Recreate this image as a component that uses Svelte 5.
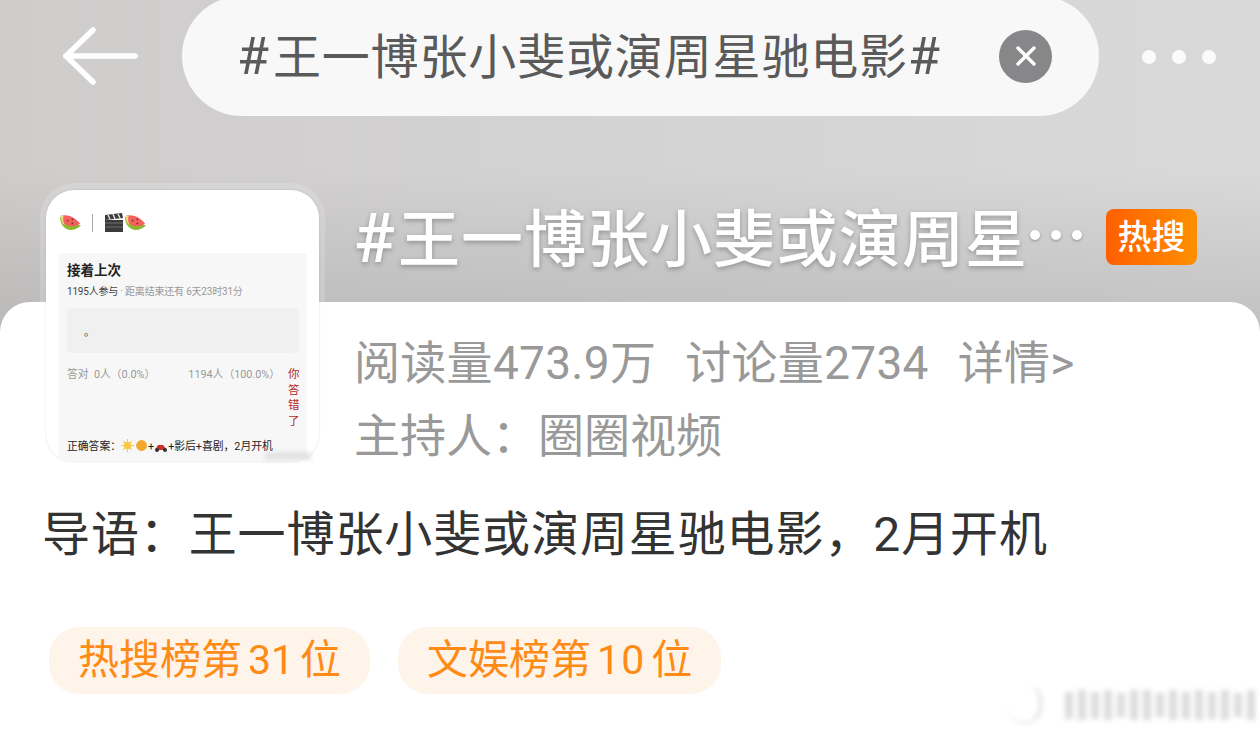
<script>
	const tags = [
		{ name: '热搜榜第', rank: '31', unit: '位' },
		{ name: '文娱榜第', rank: '10', unit: '位' }
	];
	const marks = [9, 10, 9, 10, 8, 10, 10, 8, 10, 9, 10, 9, 10, 8, 10];
</script>

{#snippet melon(size)}
	<svg width={size} height={size} viewBox="0 0 24 24">
		<path d="M1 6 C1 18 12 25 23 15 Z" fill="#8cb92f" />
		<path d="M2 5 C2 14 13 20 22 13 C17 7 9 3 2 5 Z" fill="#f5605f" />
		<path d="M2 5 C1.500 9 3 13 6 15 C4 11 4 8 5 4.500 Z" fill="#f3d68c" />
		<circle cx="9" cy="10" r="0.9" fill="#5c3a20" />
		<circle cx="14" cy="13" r="0.9" fill="#5c3a20" />
		<circle cx="14" cy="8.800" r="0.9" fill="#5c3a20" />
	</svg>
{/snippet}

<div class="page">
	<div class="hero">
		<div class="topbar">
			<button class="back" aria-label="back">
				<svg width="76" height="60" viewBox="0 0 76 60" fill="none" stroke="#fff" stroke-width="5.500" stroke-linecap="round" stroke-linejoin="round">
					<path d="M30 3 L3 29 L30 55" />
					<path d="M3 29 H72" />
				</svg>
			</button>
			<div class="search">
				<span class="query"><span class="hash">#</span>王一博张小斐或演周星驰电影<span class="hash">#</span></span>
				<span class="clear">
					<svg width="22" height="22" viewBox="0 0 22 22" stroke="#fff" stroke-width="3.400" stroke-linecap="round">
						<path d="M3 3 L19 19 M19 3 L3 19" />
					</svg>
				</span>
			</div>
			<div class="more"><i></i><i></i><i></i></div>
		</div>
		<div class="title-row">
			<h1><span class="hash">#</span>王一博张小斐或演周星</h1>
			<div class="ellipsis"><i></i><i></i><i></i></div>
			<span class="hot">热搜</span>
		</div>
	</div>

	<div class="sheet">
		<div class="meta">
			<div class="stats">
				<span>阅读量473.9万</span>
				<span>讨论量2734</span>
				<span>详情&gt;</span>
			</div>
			<div class="host">主持人：圈圈视频</div>
		</div>
		<p class="lead">导语：王一博张小斐或演周星驰电影，2月开机</p>
		<div class="tags">
			{#each tags as t}
				<span class="tag">{t.name}<b>{t.rank}</b>{t.unit}</span>
			{/each}
		</div>
	</div>

	<div class="avatar">
		<div class="avatar-inner">
			<div class="emoji-row">
				{@render melon(23)}
				<span class="sep"></span>
				<svg width="20" height="20" viewBox="0 0 20 20">
					<rect x="1" y="7" width="18" height="12" fill="#3a3a3a" />
					<path d="M1 2 L18 0 L19 5 L1 7 Z" fill="#3a3a3a" />
					<path d="M4 2 L6 6 M9 1 L11 6 M14 1 L16 5" stroke="#ddd" stroke-width="1.500" />
					<path d="M1 10 H19 M1 14 H19" stroke="#888" stroke-width="0.700" />
				</svg>
				{@render melon(23)}
			</div>
			<div class="quiz">
				<div class="quiz-title">接着上次</div>
				<div class="quiz-sub"><span>1195人参与</span> · 距离结束还有 6天23时31分</div>
				<div class="quiz-box">。</div>
				<div class="quiz-result">
					<span>答对&nbsp; 0人（0.0%）</span>
					<span class="wrong-count">1194人（100.0%）</span>
					<span class="wrong">你答错了</span>
				</div>
				<div class="answer">
					正确答案：<svg class="sun" width="27" height="13" viewBox="0 0 25 12">
						<circle cx="6" cy="6" r="3.500" fill="#f7c948" />
						<path d="M6 0 V12 M0 6 H12 M2 2 L10 10 M10 2 L2 10" stroke="#f7c948" stroke-width="1" />
						<circle cx="19" cy="6" r="5" fill="#f0a92c" />
					</svg>+<svg width="14" height="10" viewBox="0 0 14 10">
						<path d="M1 8 L4 3 L9 3 L13 8 Z" fill="#c8322b" />
						<circle cx="3" cy="8" r="2" fill="#333" />
						<circle cx="11" cy="8" r="2" fill="#333" />
					</svg>+影后+喜剧，2月开机
				</div>
			</div>
		</div>
		<div class="stamp"></div>
	</div>

	<div class="watermark">
		<span class="wm-logo"></span>
		{#each marks as m}
			<span class="wm-bar" style="height: {m * 3}px"></span>
		{/each}
	</div>
</div>

<style>
	:global(body) {
		margin: 0;
	}

	.page {
		position: relative;
		width: 1260px;
		height: 738px;
		overflow: hidden;
		font-family: Roboto, 'Noto Sans CJK SC', sans-serif;
		background:
			linear-gradient(180deg, rgba(255, 255, 255, 0) 50%, rgba(120, 120, 120, 0.26) 100%) 0 0 / 100% 340px no-repeat,
			linear-gradient(90deg, #cfcdcc 0%, #d4d3d3 50%, #d9d9d9 100%) 0 0 / 100% 340px no-repeat,
			#fff;
	}

	.hero {
		height: 302px;
	}

	.topbar {
		display: flex;
		align-items: center;
		height: 114px;
		padding-left: 63px;
	}

	.back {
		width: 76px;
		height: 60px;
		padding: 0;
		margin-right: 43px;
		border: none;
		background: none;
	}

	.search {
		display: flex;
		align-items: center;
		box-sizing: border-box;
		width: 917px;
		height: 120px;
		margin-top: -2px;
		padding: 0 47px 0 55px;
		border-radius: 60px;
		background: #f8f8f8;
	}

	.query {
		flex: 1;
		margin-bottom: 6px;
		font-size: 48px;
		letter-spacing: 0.850px;
		color: #5a5a5a;
		white-space: nowrap;
	}

	.query .hash {
		margin-right: 3px;
		font-size: 52px;
	}

	.clear {
		display: flex;
		align-items: center;
		justify-content: center;
		width: 53px;
		height: 53px;
		border-radius: 50%;
		background: #87878a;
	}

	.more {
		display: flex;
		gap: 16px;
		margin-left: 43px;
	}

	.more i {
		width: 14px;
		height: 14px;
		border-radius: 50%;
		background: #fbfbfb;
	}

	.title-row {
		display: flex;
		align-items: center;
		height: 74px;
		margin-top: 84px;
		padding-left: 354px;
	}

	h1 {
		margin: 0;
		font-size: 62px;
		font-weight: 500;
		letter-spacing: 1px;
		color: #fff;
		white-space: nowrap;
		text-shadow: 0 2px 5px rgba(0, 0, 0, 0.28);
	}

	h1 .hash {
		margin-right: 2px;
		font-size: 68px;
	}

	.ellipsis {
		display: flex;
		gap: 11px;
		margin-left: 2px;
	}

	.ellipsis i {
		width: 10px;
		height: 10px;
		border-radius: 50%;
		background: #fff;
		box-shadow: 0 1px 3px rgba(0, 0, 0, 0.3);
	}

	.hot {
		width: 91px;
		height: 56px;
		margin: 4px 63px 0 auto;
		border-radius: 8px;
		background: linear-gradient(90deg, #ff5f00, #ff8f00);
		color: #fff;
		font-size: 34px;
		font-weight: 500;
		line-height: 56px;
		text-align: center;
	}

	.sheet {
		box-sizing: border-box;
		height: 436px;
		border-radius: 30px 30px 0 0;
		background: #fff;
	}

	.meta {
		padding: 23px 0 0 354px;
		color: #999;
		font-size: 46px;
		line-height: 76px;
	}

	.stats {
		display: flex;
		gap: 29px;
		height: 73px;
		letter-spacing: 0.300px;
	}

	.lead {
		margin: 23px 0 0 42px;
		font-size: 48px;
		letter-spacing: 0.900px;
		line-height: 76px;
		color: #333;
	}

	.tags {
		display: flex;
		gap: 28px;
		margin: 54px 0 0 49px;
	}

	.tag {
		height: 67px;
		padding: 0 29px;
		border-radius: 30px;
		background: #fef4ea;
		color: #ff8b17;
		font-size: 41px;
		line-height: 67px;
		white-space: nowrap;
	}

	.tag b {
		margin: 0 6px;
		font-weight: 400;
	}

	.tag + .tag b {
		letter-spacing: 1px;
	}

	.avatar {
		position: absolute;
		left: 40px;
		top: 183px;
		box-sizing: border-box;
		width: 285px;
		height: 285px;
		padding: 7px 6px 6px;
		border-radius: 34px;
		background: rgba(255, 255, 255, 0.16);
	}

	.avatar-inner {
		box-sizing: border-box;
		height: 100%;
		padding: 0 12px 0 13px;
		overflow: hidden;
		border-radius: 28px;
		background: #fff;
		box-shadow: 0 0 2px rgba(0, 0, 0, 0.15);
	}

	.emoji-row {
		display: flex;
		align-items: center;
		height: 63px;
		padding-top: 2px;
		box-sizing: border-box;
	}

	.sep {
		width: 1px;
		height: 18px;
		margin: 0 11px 0 10px;
		background: #aaa;
	}

	.quiz {
		height: 210px;
		padding: 0 8px;
		border-radius: 4px 4px 0 0;
		background: #f7f7f7;
		font-size: 10.800px;
		color: #999;
	}

	.quiz-title {
		padding-top: 6px;
		font-size: 13.500px;
		font-weight: 700;
		line-height: 22px;
		color: #222;
	}

	.quiz-sub {
		margin-top: 3px;
		font-size: 10px;
		letter-spacing: -0.200px;
		line-height: 16px;
		white-space: nowrap;
	}

	.quiz-sub span {
		color: #444;
	}

	.quiz-box {
		height: 45px;
		margin-top: 8px;
		padding: 15px 17px 0;
		box-sizing: border-box;
		border-radius: 4px;
		background: #f0f0f0;
		font-size: 11px;
		color: #444;
	}

	.quiz-result {
		display: flex;
		margin-top: 14px;
		line-height: 15.500px;
	}

	.wrong-count {
		margin-left: 33px;
		white-space: nowrap;
	}

	.wrong {
		width: 11px;
		margin-left: auto;
		font-size: 11.500px;
		color: #b3262a;
	}

	.answer {
		margin-top: 10px;
		line-height: 14px;
		color: #222;
		white-space: nowrap;
	}

	.answer svg {
		vertical-align: -2px;
	}

	.stamp {
		position: absolute;
		right: 14px;
		bottom: 8px;
		width: 46px;
		height: 8px;
		background: rgba(190, 190, 190, 0.35);
		filter: blur(2px);
	}

	.watermark {
		position: absolute;
		left: 1008px;
		top: 686px;
		display: flex;
		align-items: center;
		gap: 5px;
		height: 38px;
		filter: blur(2.500px);
	}

	.wm-logo {
		width: 34px;
		height: 38px;
		margin-right: 18px;
		border-radius: 8px 14px 17px 17px;
		border-right: 3px solid #dcdcdc;
		border-bottom: 2px solid #e8e8e8;
		box-sizing: border-box;
	}

	.wm-bar {
		width: 8px;
		background: #dcdcdc;
	}
</style>
